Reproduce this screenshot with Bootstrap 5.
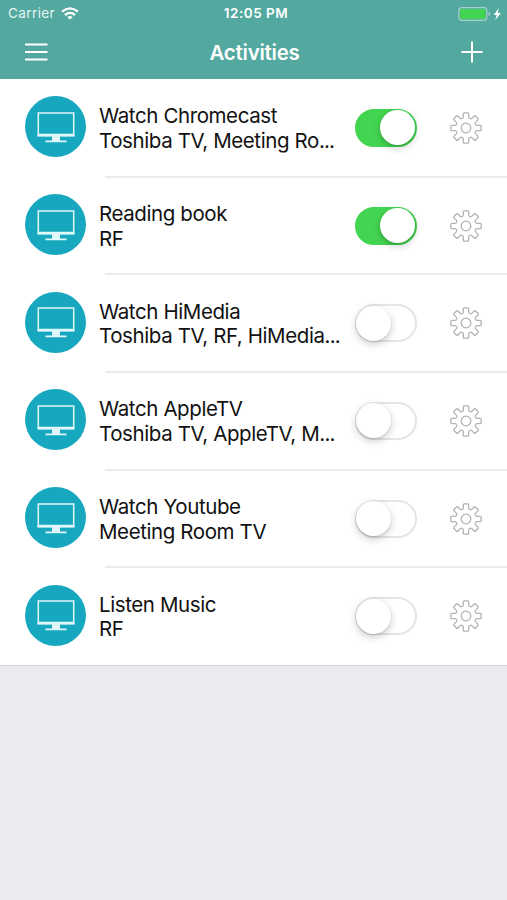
<!DOCTYPE html>
<html lang="en">
<head>
<meta charset="utf-8">
<meta name="viewport" content="width=device-width, initial-scale=1">
<title>Activities</title>
<link href="https://cdn.jsdelivr.net/npm/bootstrap@5.3.0/dist/css/bootstrap.min.css" rel="stylesheet">
<style>
body{background:#eaeaf0;font-family:Inter,"Liberation Sans",sans-serif;color:#111;min-height:100vh;overflow:hidden}
svg{display:block;flex:none}
.top-area{background:#53a99f;height:79px;color:#fff}
.status{height:27px;padding:0 5px 0 8px;font-size:13.5px}
.status>div{flex:1 1 0}
.carrier{letter-spacing:.4px;color:#e6f4f2}
.wifi{margin-left:6px}
.clock{font-weight:600;letter-spacing:.5px;padding-left:2px}
.title-bar{height:50px;padding:0 24px 0 25px}
.title-bar h1{font-size:20.5px;font-weight:600;letter-spacing:-.25px;padding-top:2px}
.activity{height:97.7px;padding:0 25px}
.activity+.activity::before{content:"";position:absolute;top:-1px;left:105px;right:0;height:2px;background:#ececee}
.activities{border-bottom:1px solid #d5d5da}
.round{width:61px;height:61px;background:#17a8bf;margin-top:-2px}
.words{margin-left:13px;width:256px;font-size:20.5px;line-height:24.5px;letter-spacing:-.4px;margin-top:2px}
.dots{letter-spacing:-.8px}
.switch{width:62px;height:38px;border-radius:19px;border:2px solid #e5e5e5;background:#fff;flex:none}
.knob{width:35px;height:35px;border-radius:50%;background:#fff;box-shadow:0 3px 8px rgba(0,0,0,.2),0 1px 2px rgba(0,0,0,.12);margin-left:-1px}
.switch.on{background:#43d551;border-color:#43d551;justify-content:flex-end}
.switch.on .knob{margin:0}
.gear{margin-left:33px}
</style>
<script src="https://cdn.jsdelivr.net/npm/bootstrap@5.3.0/dist/js/bootstrap.bundle.min.js"></script>
</head>
<body>
<svg width="0" height="0" class="position-absolute">
  <defs>
    <symbol id="tv" viewBox="0 0 38 32">
      <path d="M1.3 2H36.7V24.6H1.3Z" fill="none" stroke="#e0f8fb" stroke-width="1.5"/>
      <path d="M.6 22.8H37.4V25.4H.6ZM15 25H23V29.8H15ZM8.5 29.6H29.5V31.3H8.5Z" fill="#e0f8fb"/>
    </symbol>
    <path id="tooth" d="M-3.9-9.42Q-2.7-9.6-2.7-11V-14.2Q-2.7-15.2-1.7-15.2H1.7Q2.7-15.2 2.7-14.2V-11Q2.7-9.6 3.9-9.42"/>
    <symbol id="gear" viewBox="-16 -16 32 32">
      <g fill="none" stroke="#b2b2b2" stroke-width="1.3">
        <use href="#tooth"/><use href="#tooth" transform="rotate(45)"/><use href="#tooth" transform="rotate(90)"/><use href="#tooth" transform="rotate(135)"/><use href="#tooth" transform="rotate(180)"/><use href="#tooth" transform="rotate(225)"/><use href="#tooth" transform="rotate(270)"/><use href="#tooth" transform="rotate(315)"/>
        <circle r="4.8"/>
      </g>
    </symbol>
  </defs>
</svg>
<header class="top-area">
  <div class="status d-flex align-items-center">
    <div class="d-flex align-items-center"><span class="carrier">Carrier</span>
      <svg class="wifi" width="18" height="13" viewBox="0 0 18 13"><g fill="none" stroke="#fff" stroke-width="2.3"><path d="M1 4.7Q9-2 17 4.7"/><path d="M4 8Q9 3.8 14 8"/></g><path d="M6.3 9.9Q9 7.9 11.7 9.9L9 12.6Z" fill="#fff"/></svg>
    </div>
    <span class="clock">12:05 PM</span>
    <div class="d-flex justify-content-end">
      <svg width="44" height="14" viewBox="0 0 44 14"><rect x=".8" y=".7" width="28" height="12.6" rx="2.8" fill="none" stroke="#a6d2cc" stroke-width="1.2"/><rect x="2.2" y="2" width="25.2" height="10" rx="1.2" fill="#43d551"/><path d="M30.5 5Q32.3 5.3 32.3 7T30.5 9Z" fill="#a6d2cc"/><path d="M40.8 1L35.8 8H38.8L37.2 13.3L43 5.9H39.8Z" fill="#fff"/></svg>
    </div>
  </div>
  <nav class="title-bar d-flex align-items-center justify-content-between">
    <svg width="23" height="18" viewBox="0 0 23 18"><path d="M0 1.5H22.5M0 9H22.5M0 16.5H22.5" stroke="#fff" stroke-width="1.8"/></svg>
    <h1 class="mb-0">Activities</h1>
    <svg width="22" height="22" viewBox="0 0 22 22"><path d="M.5 11H21.5M11 .5V21.5" stroke="#fff" stroke-width="2"/></svg>
  </nav>
</header>
<main class="activities bg-white">
  <div class="activity position-relative d-flex align-items-center">
    <div class="round rounded-circle d-flex align-items-center justify-content-center flex-shrink-0"><svg width="38" height="32"><use href="#tv"/></svg></div>
    <div class="words text-nowrap flex-shrink-0"><div>Watch Chromecast</div><div>Toshiba TV, Meeting Ro<span class="dots">...</span></div></div>
    <div class="switch on d-flex align-items-center"><div class="knob flex-shrink-0"></div></div>
    <svg class="gear" width="32" height="32"><use href="#gear"/></svg>
  </div>
  <div class="activity position-relative d-flex align-items-center">
    <div class="round rounded-circle d-flex align-items-center justify-content-center flex-shrink-0"><svg width="38" height="32"><use href="#tv"/></svg></div>
    <div class="words text-nowrap flex-shrink-0"><div>Reading book</div><div>RF</div></div>
    <div class="switch on d-flex align-items-center"><div class="knob flex-shrink-0"></div></div>
    <svg class="gear" width="32" height="32"><use href="#gear"/></svg>
  </div>
  <div class="activity position-relative d-flex align-items-center">
    <div class="round rounded-circle d-flex align-items-center justify-content-center flex-shrink-0"><svg width="38" height="32"><use href="#tv"/></svg></div>
    <div class="words text-nowrap flex-shrink-0"><div>Watch HiMedia</div><div>Toshiba TV, RF, HiMedia<span class="dots">...</span></div></div>
    <div class="switch d-flex align-items-center"><div class="knob flex-shrink-0"></div></div>
    <svg class="gear" width="32" height="32"><use href="#gear"/></svg>
  </div>
  <div class="activity position-relative d-flex align-items-center">
    <div class="round rounded-circle d-flex align-items-center justify-content-center flex-shrink-0"><svg width="38" height="32"><use href="#tv"/></svg></div>
    <div class="words text-nowrap flex-shrink-0"><div>Watch AppleTV</div><div>Toshiba TV, AppleTV, M<span class="dots">...</span></div></div>
    <div class="switch d-flex align-items-center"><div class="knob flex-shrink-0"></div></div>
    <svg class="gear" width="32" height="32"><use href="#gear"/></svg>
  </div>
  <div class="activity position-relative d-flex align-items-center">
    <div class="round rounded-circle d-flex align-items-center justify-content-center flex-shrink-0"><svg width="38" height="32"><use href="#tv"/></svg></div>
    <div class="words text-nowrap flex-shrink-0"><div>Watch Youtube</div><div>Meeting Room TV</div></div>
    <div class="switch d-flex align-items-center"><div class="knob flex-shrink-0"></div></div>
    <svg class="gear" width="32" height="32"><use href="#gear"/></svg>
  </div>
  <div class="activity position-relative d-flex align-items-center">
    <div class="round rounded-circle d-flex align-items-center justify-content-center flex-shrink-0"><svg width="38" height="32"><use href="#tv"/></svg></div>
    <div class="words text-nowrap flex-shrink-0"><div>Listen Music</div><div>RF</div></div>
    <div class="switch d-flex align-items-center"><div class="knob flex-shrink-0"></div></div>
    <svg class="gear" width="32" height="32"><use href="#gear"/></svg>
  </div>
</main>
</body>
</html>
